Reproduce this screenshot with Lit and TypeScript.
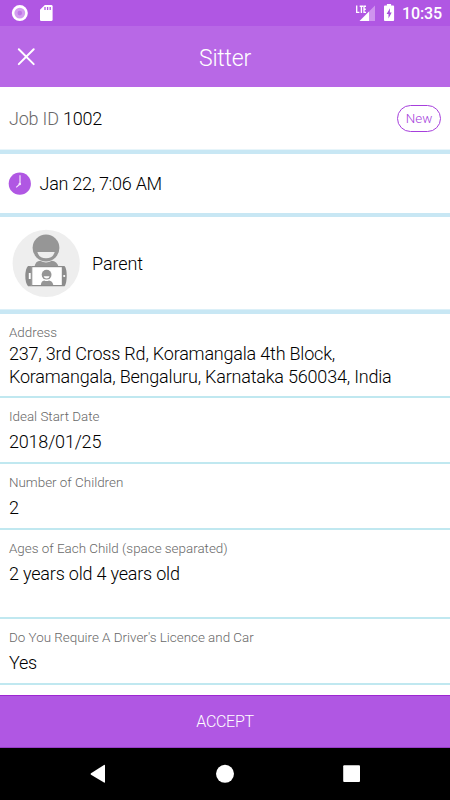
import { LitElement, html, css, svg } from "lit";
import { customElement, property } from "lit/decorators.js";
import { classMap } from "lit/directives/class-map.js";

@customElement("status-bar")
class StatusBar extends LitElement {
  static styles = css`
    :host { display: flex; align-items: center; height: 26px; flex: none; background: #b057e3; color: #fff; }
    svg { display: block; flex: none; }
    .clock { width: 41px; margin-right: 8px; text-align: right; font: 500 16px/26px Roboto, sans-serif; letter-spacing: -0.1px; white-space: nowrap; padding-top: 2px; }
    .spacer { flex: 1; }
  `;
  render() {
    return html`
      <svg width="60" height="26" viewBox="0 0 60 26">
        <circle cx="19.8" cy="13.1" r="8" fill="#fff" />
        <circle cx="19.8" cy="13.1" r="5.4" fill="#d39bf0" />
        <circle cx="19.8" cy="13.1" r="2.3" fill="#be76e7" />
        <path d="M44.8 5H51.3Q52.6 5 52.6 6.3V19.7Q52.6 21 51.3 21H41.3Q40 21 40 19.7V9.8Z" fill="#fff" />
        <path d="M45 7v3M47.6 7v3M50.2 7v3" stroke="#b057e3" stroke-width="1.3" />
      </svg>
      <span class="spacer"></span>
      <svg width="46" height="26" viewBox="355 0 46 26">
        <path d="M375 5.5V21H369V11.5Z" fill="#cf93ee" />
        <path d="M369 11.5V21H359.5Z" fill="#fff" />
        <path d="M356.7 5.6V12.3H359.4M359.7 6.2H363.1M361.4 6.2V12.9M366 6.2H364V12.3H366M364 9.2H365.8" fill="none" stroke="#fff" stroke-width="1.35" />
        <path d="M386.9 4H391.1V5.6H393.2Q394.1 5.6 394.1 6.5V20.1Q394.1 21 393.2 21H384.9Q384 21 384 20.1V6.5Q384 5.6 384.9 5.6H386.9Z" fill="#fff" />
        <path d="M390 8.2L386.6 14H388.5V18.6L391.7 12.6H389.8Z" fill="#a64cdb" />
      </svg>
      <span class="clock">10:35</span>
    `;
  }
}

@customElement("title-bar")
class TitleBar extends LitElement {
  static styles = css`
    :host { display: grid; grid-template-columns: 52px 1fr 52px; align-items: center; height: 61px; flex: none; background: #b868e6; color: #fff; }
    svg { display: block; }
    .title { text-align: center; font: 300 23px/28px Roboto, sans-serif; letter-spacing: -0.2px; padding-top: 4px; }
  `;
  render() {
    return html`
      <svg width="52" height="61" viewBox="0 0 52 61">
        <path d="M18.8 23.2L33.7 38.1M33.7 23.2L18.8 38.1" stroke="#fff" stroke-width="2" stroke-linecap="round" />
      </svg>
      <span class="title">Sitter</span>
    `;
  }
}

@customElement("job-field")
class JobField extends LitElement {
  @property() label = "";
  @property({ attribute: false }) lines: string[] = [];
  @property({ type: Boolean }) tight = false;
  @property({ type: Boolean }) tall = false;
  static styles = css`
    :host { display: block; flex: none; }
    .field { box-sizing: border-box; height: 66px; padding: 10px 9px 0; border-bottom: 2px solid #c0e8f0; white-space: nowrap; }
    .label { font: 300 13.4px/17px Roboto, sans-serif; color: #686868; }
    .value { margin-top: 5px; font: 300 18px/23px Roboto, sans-serif; letter-spacing: -0.2px; color: #000; }
    .tight { height: 84px; }
    .tight .value { margin-top: 1px; }
    .tall { height: 89px; }
  `;
  render() {
    return html`<div class=${classMap({ field: true, tight: this.tight, tall: this.tall })}>
      <div class="label">${this.label}</div>
      <div class="value">${this.lines.map((l) => html`<div>${l}</div>`)}</div>
    </div>`;
  }
}

const smiler = svg`
  <circle cx="46" cy="248" r="13.4" fill="#969696" />
  <path d="M37.4 252H54.7Q53 258.3 46 258.3T37.4 252Z" fill="#eee" />
`;

@customElement("app-root")
class AppRoot extends LitElement {
  static styles = css`
    :host { display: flex; flex-direction: column; height: 800px; overflow: hidden; background: #fff; font-family: Roboto, sans-serif; }
    svg { display: block; flex: none; }
    .row { display: flex; align-items: center; box-sizing: border-box; flex: none; border-bottom: 4px solid #c8e7f4; font: 300 18px/24px Roboto, sans-serif; letter-spacing: -0.2px; color: #000; }
    .job { height: 67px; padding: 1px 9px 0; justify-content: space-between; box-shadow: inset 0 -1px #e8f5fa; }
    .muted { color: #686868; }
    .badge { box-sizing: border-box; width: 44px; height: 27px; margin-top: -1px; border: 1px solid #a63fdc; border-radius: 14px; text-align: center; font: 300 13.4px/26px Roboto, sans-serif; letter-spacing: 0; color: #a63fdc; }
    .time { height: 63px; padding-left: 8px; gap: 7.5px; }
    .time .text { padding-top: 1px; letter-spacing: -0.28px; }
    .person { height: 97px; padding-left: 12px; gap: 12px; box-shadow: inset 0 -1px #dcf0f8; }
    .person .text { padding-top: 1px; letter-spacing: -0.1px; }
    .body { flex: 1; min-height: 0; overflow: hidden; }
    .accept { box-sizing: border-box; height: 53px; flex: none; border-top: 1px solid #9d26d1; border-bottom: 1px solid #963bc6; background: #b057e3; color: #fff; text-align: center; font: 300 16px/52px Roboto, sans-serif; letter-spacing: -0.3px; }
    .nav { height: 52px; background: #000; }
  `;
  render() {
    return html`
      <status-bar></status-bar>
      <title-bar></title-bar>
      <div class="row job">
        <span><span class="muted">Job ID</span> 1002</span>
        <span class="badge">New</span>
      </div>
      <div class="row time">
        <svg width="24" height="24" viewBox="0 0 24 24">
          <circle cx="11.8" cy="11.7" r="11.1" fill="#b057e3" />
          <path d="M12 3.2V12L8.2 15.4" fill="none" stroke="#f4e5fc" stroke-width="1.2" />
          <circle cx="11.8" cy="12" r="1.3" fill="#f4e5fc" />
        </svg>
        <span class="text">Jan 22, 7:06 AM</span>
      </div>
      <div class="row person">
        <svg width="68" height="69" viewBox="12 229 68 69">
          <circle cx="46.2" cy="263.4" r="33.6" fill="#eee" />
          ${smiler}
          <path d="M34.5 266.5Q35.5 261 40.2 260.7Q46 264.3 51.8 260.7Q57 261.3 58.5 266.5Z" fill="#969696" />
          <path d="M28 266H64.5Q66.7 268.5 66.7 276T64.5 286.3H28Q25.3 283 25.3 276T28 266Z" fill="#8c8c8c" />
          <path d="M31.2 266V286" stroke="#aaa" stroke-width=".7" />
          <rect x="32.3" y="267.2" width="29.5" height="17.8" fill="#fff" />
          <rect x="28.8" y="273" width="1.9" height="6" fill="#fff" />
          <circle cx="64.2" cy="276" r="1.1" fill="#fff" />
          <circle cx="46.6" cy="274.7" r="4.9" fill="#969696" />
          <path d="M43.6 276.2H49.6Q49 278.5 46.6 278.5T43.6 276.2Z" fill="#fff" />
          <path d="M40.8 285Q41.3 280.8 44.2 280.4Q46.6 281.7 49 280.4Q52.5 280.8 53.3 285Z" fill="#969696" />
        </svg>
        <span class="text">Parent</span>
      </div>
      <div class="body">
        <job-field tight label="Address" .lines=${["237, 3rd Cross Rd, Koramangala 4th Block,", "Koramangala, Bengaluru, Karnataka 560034, India"]}></job-field>
        <job-field label="Ideal Start Date" .lines=${["2018/01/25"]}></job-field>
        <job-field label="Number of Children" .lines=${["2"]}></job-field>
        <job-field tall label="Ages of Each Child (space separated)" .lines=${["2 years old 4 years old"]}></job-field>
        <job-field label="Do You Require A Driver's Licence and Car" .lines=${["Yes"]}></job-field>
      </div>
      <div class="accept">ACCEPT</div>
      <svg class="nav" width="450" height="52" viewBox="0 748 450 52">
        <path d="M105 765.6V782Q105 783 104 782.5L91 774.7Q90 774 91 773.3L104 765Q105 764.5 105 765.6Z" fill="#fff" />
        <circle cx="225" cy="773.8" r="9" fill="#fff" />
        <rect x="343.2" y="765.2" width="16.8" height="16.8" rx="1" fill="#fff" />
      </svg>
    `;
  }
}
